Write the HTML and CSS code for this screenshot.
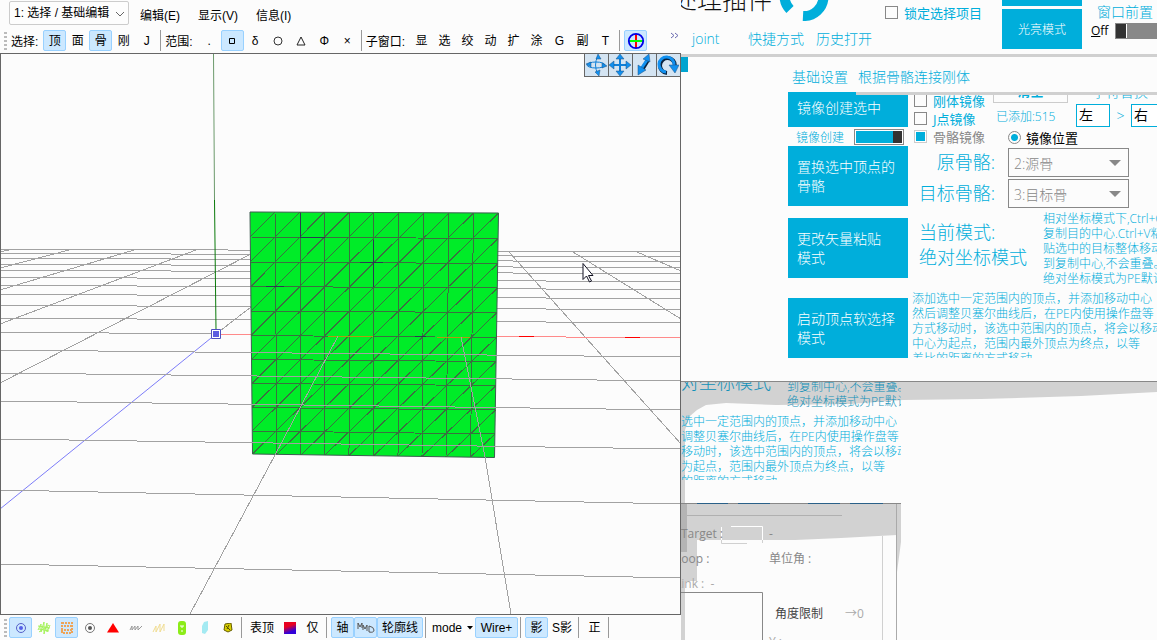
FILE: index.html
```html
<!DOCTYPE html>
<html lang="zh-CN">
<head>
<meta charset="utf-8">
<title>PmxView</title>
<link rel="stylesheet" href="styles.css">
</head>
<body>
<div class="desktop">
  <main class="viewer">
    <nav class="menubar">
      <span class="combo"><select aria-label="工具栏"><option>1: 选择 / 基础编辑</option></select>
        <svg class="combo-arrow" width="10" height="6" viewBox="0 0 10 6"><path d="M1 1l4 4 4-4" fill="none" stroke="#666"/></svg></span>
      <button class="menu">编辑(E)</button><button class="menu">显示(V)</button><button class="menu">信息(I)</button>
    </nav>
    <div class="toolbar">
      <i class="grip"></i><span class="bar-label">选择:</span>
      <button class="tool on">顶</button><button class="tool">面</button><button class="tool on">骨</button><button class="tool">刚</button><button class="tool">J</button>
      <i class="sep"></i><span class="bar-label">范围:</span>
      <button class="tool">.</button>
      <button class="tool on" aria-label="矩形"><svg width="8" height="8"><path d="M1.500 1.500h5v5h-5z" fill="none" stroke="#000"/></svg></button>
      <button class="tool">δ</button>
      <button class="tool" aria-label="圆"><svg width="12" height="12"><circle cx="6" cy="6" r="4" fill="none" stroke="#333"/></svg></button>
      <button class="tool" aria-label="三角"><svg width="12" height="12"><path d="M6 2l4 8H2z" fill="none" stroke="#222"/></svg></button>
      <button class="tool">Φ</button><button class="tool">×</button>
      <i class="sep"></i><span class="bar-label">子窗口:</span>
      <button class="tool">显</button><button class="tool">选</button><button class="tool">绞</button><button class="tool">动</button><button class="tool">扩</button><button class="tool">涂</button><button class="tool">G</button><button class="tool">副</button><button class="tool">T</button>
      <i class="sep"></i>
      <button class="tool on" aria-label="操作盘"><svg width="18" height="18" viewBox="0 0 18 18"><path d="M9 2v14" stroke="#f00" stroke-width="2"/><path d="M2 9h14" stroke="#0f0" stroke-width="2"/><circle cx="9" cy="9" r="7.200" fill="none" stroke="#0000e8" stroke-width="1.800"/></svg></button>
      <button class="overflow" aria-label="更多"><svg width="9" height="7"><path d="M1 1l3 2.500-3 2.500M5 1l3 2.500-3 2.500" fill="none" stroke="#6a6ab0"/></svg></button>
    </div>
    <section class="viewport">
      <svg class="scene" viewBox="1 54 679 560" preserveAspectRatio="xMinYMin slice">
        <g class="floor">
          <path d="M0 249L681 252M0 253L681 257M0 258L681 262M0 264L681 268M0 270L681 274M0 277L681 282M0 285L681 290M0 294L681 299M0 305L681 310M0 318L681 323M0 332L216 334"/>
          <path d="M0 252L13 249M0 268L73 249M0 290L134 250M0 324L196 250M0 383L251 254M216 334L251 307M509 252L681 444M573 252L681 319M637 252L681 271"/>
        </g>
        <path d="M216 334L681 338" stroke="#ff8a8a" shape-rendering="crispEdges"/>
        <path d="M519 336.500H534M625 337.500H640" stroke="#f00" shape-rendering="crispEdges"/>
        <path d="M213.500 54L214.500 200" stroke="#6c9a6c"/><path d="M214.500 200L216 330" stroke="#0a7a0a"/>
        <path d="M216 334L0 509" stroke="#7c7cf8"/>
        <path d="M250 212L498.500 213L494.500 457.500L252.500 454z" fill="#00ec28" stroke="#3d5a50"/>
        <path class="mesh" d="M275 212L277 454M300 212L301 455M324.500 212L325 455M349.500 212L349 455.500M374 212.500L373.500 456M399 212.500L398 456M424 213L422 456.500M449 213L446 457M473.500 213L470.500 457M250 237L498 238.500M250.500 262L498 263.500M251 286.500L497.500 288M251 311L497 312.500M251 335.500L496.500 337.500M251.500 359.500L496 361.500M252 383.500L496 385.500M252 407.500L495.500 410M252 431L495 434"/>
        <path class="mesh" d="M250 237L275 212M250 262L300 212M251 286.500L324.500 212M251 311L349.500 212M251 335.500L374 212M251.500 359.500L399 213M252 383.500L424 213M252 407.500L449 213M252 431L473.500 213M252.500 454L498.500 213M277 454L498 238.500M301 455L498 263.500M325 455L497.500 288M349 455.500L497 312.500M373.500 456L496.500 337.500M398 456L496 361.500M422 456.500L496 385.500M446 457L495.500 410M470.500 457L495 434"/>
        <path d="M300 237.500H325M360 262.500H383M266 286.500H284M415 336.500H426M373.500 240V287M300 213V237" stroke="#2c3a50" shape-rendering="crispEdges"/>
        <path d="M328 336.500H373M437 337.500H470" stroke="#b09a10" shape-rendering="crispEdges"/>
        <g class="floor">
          <path d="M0 350L681 357M0 373L681 381M0 401L681 410M0 439L681 449M0 490L681 504M0 564L681 578M338 336L275 455L190 614M461 337L485 457L511 614"/>
        </g>
        <path d="M211.500 329.500h9v9h-9z" fill="#fff" stroke="#5050c0"/><path d="M213 331h6v6h-6z" fill="#5c5ce0"/>
        <path d="M583 263.500v16l3.500-3.500 3 6 2-1-3-5.500h4.500z" fill="#fff" stroke="#112"/>
      </svg>
      <div class="navigator">
        <button aria-label="旋转视角"><svg viewBox="0 0 22 22"><g class="ico"><ellipse cx="11" cy="11" rx="9" ry="3"/><path d="M13 2q-5 9 0 18"/></g><path class="tip" d="M13 0l3 5h-5zM1 10l5-2v5zM22 12l-5-3v5zM10 18l5-2-1 6z"/></svg></button>
        <button aria-label="平移"><svg viewBox="0 0 22 22"><g class="ico thick"><path d="M11 4v14M4 11h14"/></g><path class="tip" d="M11 0l4 5H7zM11 22l4-5H7zM0 11l5-4v8zM22 11l-5-4v8z"/></svg></button>
        <button aria-label="缩放"><svg viewBox="0 0 22 22"><path d="M15 6L9 16" stroke="#0a2440" stroke-width="4"/><path d="M14 6L8 15" stroke="#1090f0" stroke-width="3"/><path class="tip" d="M16 0l1 8-7-3zM5 21l0-10 8 5z"/></svg></button>
        <button aria-label="转动"><svg viewBox="0 0 22 22"><path d="M10 19A7.500 7.500 0 1 1 18 12" fill="none" stroke="#0a2440" stroke-width="4"/><path d="M9 18A7.500 7.500 0 1 1 17 11" fill="none" stroke="#1090f0" stroke-width="3"/><path class="tip" d="M12 11h10l-4 8z"/></svg></button>
      </div>
    </section>
    <div class="toolbar bottom">
      <i class="grip"></i>
      <button class="tool on" aria-label="顶点"><svg width="12" height="12"><circle cx="6" cy="6" r="4.500" fill="none" stroke="#5560c8"/><circle cx="6" cy="6" r="2" fill="#5560e8"/></svg></button>
      <button class="tool" aria-label="面"><svg width="14" height="14"><path d="M1 9l3-6v8l3-10v12l3-11v9l3-7M1 5l12 2M2 11l10-7M2 8l10 2" fill="none" stroke="#a4f25a"/></svg></button>
      <button class="tool on" aria-label="线框"><svg width="14" height="14"><path d="M2 2h10v10H2zM1 5h12M1 9h12" fill="none" stroke="#eea458" stroke-width="2" stroke-dasharray="2 1"/></svg></button>
      <button class="tool" aria-label="骨骼"><svg width="12" height="12"><circle cx="6" cy="6" r="4.500" fill="none" stroke="#777"/><circle cx="6" cy="6" r="2" fill="#555"/></svg></button>
      <button class="tool" aria-label="法线"><svg width="12" height="10"><path d="M6 0l6 9.500H0z" fill="#f00"/></svg></button>
      <button class="tool" aria-label="权重"><svg width="14" height="8"><path d="M1 6l2-4v4l3-4v4l3-4v4l4-4" fill="none" stroke="#999"/></svg></button>
      <button class="tool" aria-label="刚体"><svg width="14" height="10"><path d="M1 9l3-6v6l4-8v8l4-8v7" fill="none" stroke="#f0dc90"/></svg></button>
      <button class="tool" aria-label="关节"><svg width="8" height="14"><rect width="8" height="14" rx="3" fill="#8cec18"/><path d="M3 4v2h2V4M3 10h2" fill="none" stroke="#fff"/></svg></button>
      <button class="tool" aria-label="软体"><svg width="8" height="14"><path d="M3 1l4-1v9l-3 4-3-1V5z" fill="#a4eaf2"/></svg></button>
      <button class="tool" aria-label="材质"><svg width="10" height="10"><path d="M2 1l6-1 1 7-4 2-4-2z" fill="#d8d000" stroke="#665c00"/><path d="M3 3l4 4M6 2L4 6" stroke="#554c00"/></svg></button>
      <i class="sep"></i><button class="tool wide">表顶</button>
      <button class="tool" aria-label="颜色"><i class="swatch"></i></button><button class="tool">仅</button>
      <i class="sep"></i>
      <button class="tool on">轴</button>
      <button class="tool on" aria-label="MMD"><svg width="18" height="14"><path d="M1 8V2l2 4 2-4v5M6 9V4l2 4 2-4v6M12 5v6q5 1 5-2t-5-4" fill="none" stroke="#555"/></svg></button>
      <button class="tool on wide">轮廓线</button>
      <i class="sep"></i>
      <button class="tool latin">mode<svg width="6" height="4"><path d="M0 0h6L3 3.500z"/></svg></button><button class="tool on wire">Wire+</button>
      <i class="sep"></i>
      <button class="tool on">影</button><button class="tool wide">S影</button>
      <i class="sep"></i><button class="tool">正</button><i class="sep"></i>
    </div>
  </main>

  <div class="side">
    <section class="plugin">
      <header class="head">
        <div class="brand">
          <div class="brand-row"><h1>处理插件</h1>
            <svg class="logo" width="52" height="50" viewBox="0 0 52 50"><path d="M6.500 26A19.500 19.500 0 0 0 12 38.500M25 45A19.500 19.500 0 0 0 45.500 26" fill="none" stroke="#00aedb" stroke-width="10"/></svg></div>
          <nav class="links"><a href="#joint">joint</a><a href="#quick">快捷方式</a><a href="#history">历史打开</a></nav>
        </div>
        <label class="check lock"><input type="checkbox">锁定选择项目</label>
        <div class="modes"><button aria-label="主题"></button><button>光亮模式</button></div>
        <div class="front"><span>窗口前置</span><label><u>O</u>ff<input type="checkbox" role="switch" class="switch"></label></div>
      </header>
      <i class="scroll-mark"></i>
      <nav class="tabs"><a href="#base">基础设置</a><a href="#link">根据骨骼连接刚体</a></nav>
      <div class="pane">
        <div class="actions">
          <button class="act first">镜像创建选中</button>
          <label class="mirror">镜像创建<input type="checkbox" role="switch" class="switch" checked></label>
          <button class="act">置换选中顶点的<br>骨骼</button>
          <button class="act mode-act">更改矢量粘贴<br>模式</button>
          <button class="act soft-act">启动顶点软选择<br>模式</button>
        </div>
        <div class="detail">
          <div class="options">
            <div class="checks">
              <label class="check"><input type="checkbox">刚体镜像</label>
              <label class="check"><input type="checkbox">J点镜像</label>
              <label class="check off"><input type="checkbox" checked>骨骼镜像</label>
            </div>
            <div class="middle">
              <button class="clear">清空</button>
              <span class="added">已添加:515</span>
              <label class="radio"><input type="radio" checked>镜像位置</label>
            </div>
            <div class="replace"><span class="replace-title">字符替换</span>
              <div class="pair"><input type="text" value="左" aria-label="原字符"><span>&gt;</span><input type="text" value="右" aria-label="新字符"></div></div>
          </div>
          <div class="bones">
            <label for="src">原骨骼:</label><span class="pick"><select id="src"><option>2:源骨</option></select></span>
            <label for="dst">目标骨骼:</label><span class="pick"><select id="dst"><option>3:目标骨</option></select></span>
          </div>
          <div class="current">
            <p class="status">当前模式:<br>绝对坐标模式</p>
            <p class="note">相对坐标模式下,Ctrl+C<br>复制目的中心.Ctrl+V粘<br>贴选中的目标整体移动<br>到复制中心,不会重叠。<br>绝对坐标模式为PE默认</p>
          </div>
          <p class="note soft">添加选中一定范围内的顶点，并添加移动中心<br>然后调整贝塞尔曲线后，在PE内使用操作盘等<br>方式移动时，该选中范围内的顶点，将会以移动<br>中心为起点，范围内最外顶点为终点，以等<br>差比的距离的方式移动</p>
        </div>
      </div>
    </section>
    <section class="trail">
      <svg class="trail-art" width="476" height="259" viewBox="0 0 476 259">
        <path d="M0 0H476V10L400 14 300 17 222 18 170 22 95 23 45 21 25 23 16 28 9 34 4 48V259H0z" fill="#d2d2d2"/>
        <path d="M0 122H220V160L216 190V153L160 156 114 158H16V199H0z" fill="#d2d2d2"/>
        <path d="M0 122H6V170H0z" fill="#b4b4b4"/>
        <path d="M0 121.500H220" stroke="#888"/><path d="M16 121.500H47M57 121.500H89M127 121.500H159M169 121.500H202" stroke="#2a6088"/>
        <path d="M6 133.500H161" stroke="#b0b0b0"/>
        <path d="M201.500 154V259" stroke="#d0d0d0"/><path d="M215.500 122V259" stroke="#aaa"/>
        <path d="M50 144.500H81.500V158M40.500 145V158" fill="none" stroke="#fff"/><path d="M81.500 158V161M40.500 158V161.500H66" fill="none" stroke="#d0d0d0"/>
        <path d="M0 210.500H81.500V259" fill="none" stroke="#888"/>
      </svg>
      <div class="echo">
        <div class="echo-row"><p class="status">绝对坐标模式</p><p class="note">到复制中心,不会重叠。<br>绝对坐标模式为PE默认</p></div>
        <p class="note soft">添加选中一定范围内的顶点，并添加移动中心<br>然后调整贝塞尔曲线后，在PE内使用操作盘等<br>方式移动时，该选中范围内的顶点，将会以移动<br>中心为起点，范围内最外顶点为终点，以等<br>差比的距离的方式移动</p>
      </div>
      <div class="ik">
        <span>Target :</span><span>-</span>
        <span class="cut">Loop :</span><span>单位角 :</span>
        <span class="cut faint">Link :&nbsp; -</span><span></span>
        <span></span><span class="limit"><b>角度限制</b><em>→0</em></span>
        <span></span><span class="faint">Y :</span>
      </div>
    </section>
  </div>
</div>
</body>
</html>
```
FILE: styles.css
```css
* { box-sizing: border-box; }
body { margin: 0; background: #fcfcfc; color: #000; font-family: "Liberation Sans", "Noto Sans CJK SC", sans-serif; font-size: 12px; overflow: hidden; }
button, select, input { font: inherit; color: inherit; margin: 0; }
button { border: 0; padding: 0; background: none; }
p, h1 { margin: 0; font-weight: inherit; }
a { color: inherit; text-decoration: none; }
.desktop { display: grid; grid-template-columns: 681fr 476fr; min-height: 100vh; }

.viewer { display: flex; flex-direction: column; height: 100vh; min-width: 0; background: #fcfcfc; }
.menubar { display: flex; align-items: center; height: 28px; padding-left: 9px; gap: 18px; }
.combo { position: relative; width: 120px; margin: 0 -7px 2px 0; }
.combo select { width: 120px; height: 24px; padding: 0 0 0 4px; appearance: none; border: 1px solid #ccc; border-radius: 2px; background: #fdfdfd; }
.combo-arrow { position: absolute; right: 4px; top: 10px; }
.menu { height: 24px; }
.toolbar { display: flex; align-items: center; height: 25px; padding-left: 4px; white-space: nowrap; overflow: hidden; }
.grip { width: 3px; height: 18px; margin-right: 4px; background: repeating-linear-gradient(#bbb 0 2px, transparent 2px 4px); flex: none; }
.bar-label { margin-right: 5px; }
.tool { display: flex; align-items: center; justify-content: center; width: 23px; height: 21px; flex: none; border: 1px solid transparent; border-radius: 2px; line-height: 18px; }
.tool.on { background: #cce8ff; border-color: #99d1ff; }
.tool.wide { width: auto; min-width: 23px; padding: 0 3px; }
.tool.on.wide { padding: 0 4px; }
.tool.latin { width: 45px; gap: 5px; }
.tool.wire { width: 43px; }
.tool svg { flex: none; }
.sep { width: 1px; height: 21px; margin: 0 4px 0 2px; background: #999; flex: none; }
.overflow { margin: 0 2px 12px auto; }
.bottom .grip { margin-right: 2px; }
.swatch { width: 12px; height: 12px; background: linear-gradient(160deg, #e80020 35%, #3000d8 75%); }
.viewport { position: relative; flex: 1; min-height: 0; border: 1px solid #666; overflow: hidden; }
.scene { display: block; width: 100%; height: 100%; }
.floor { fill: none; stroke: #a2a2a2; shape-rendering: crispEdges; }
.mesh { fill: none; stroke: #3a7040; shape-rendering: crispEdges; }
.navigator { position: absolute; top: 0; right: 0; display: flex; }
.navigator button { width: 24px; height: 23px; background: #d4e4f2; border: solid #666; border-width: 0 0 1px 1px; }
.navigator svg { display: block; width: 22px; height: 22px; }
.ico { fill: none; stroke: #1080d8; }
.thick { stroke-width: 2; }
.tip { fill: #1090f0; stroke: #205080; stroke-width: 0.5; }

.side { display: flex; flex-direction: column; height: 100vh; min-width: 0; overflow: hidden; color: #00aedb; font-family: "Open Sans", "Noto Sans CJK SC", sans-serif; font-weight: 300; }
.plugin { height: 382px; flex: none; border-bottom: 1px solid #888; overflow: hidden; }
.head { display: flex; height: 57px; border-bottom: 3px solid #d0d0d0; overflow: hidden; white-space: nowrap; }
.brand { width: 204px; flex: none; }
.brand-row { display: flex; height: 28px; overflow: hidden; }
.brand h1 { width: 97px; margin: -18px 0 0 -9px; color: #111; font-size: 25px; line-height: 34px; flex: none; }
.logo { margin: -29px 0 0 9px; flex: none; }
.links { display: flex; width: 191px; padding-left: 11px; font-size: 14px; line-height: 22px; }
.links a:nth-child(2) { margin: 0 12px 0 auto; }
.check { display: flex; align-items: center; gap: 6px; height: 18px; font-size: 13px; font-weight: 400; }
.check input { appearance: none; width: 13px; height: 13px; border: 1px solid #888; background: #fcfcfc; }
.check input:checked { border-color: #ccc; background: #00aedb; box-shadow: inset 0 0 0 1px #fff; }
.off { color: #888; }
.lock { margin-top: 3px; width: 117px; flex: none; }
.modes { display: flex; flex-direction: column; gap: 3px; width: 80px; margin-right: 9px; flex: none; }
.modes button { height: 40px; background: #00aedb; color: #fff; flex: none; }
.modes button:first-child { height: 6px; }
.front { font-size: 14px; line-height: 20px; padding-top: 2px; flex: none; }
.front span { padding-left: 6px; }
.front label { display: flex; align-items: center; color: #000; font-size: 12px; font-weight: 400; line-height: 18px; }
.front .switch { margin-left: 7px; }
.switch { appearance: none; width: 50px; height: 16px; border: 1px solid #888; background: linear-gradient(90deg, #333 10px, #fff 10px 11px, #888 11px); flex: none; }
.switch:checked { background: linear-gradient(90deg, #00aedb 38px, #333 38px); box-shadow: inset 0 0 0 1px #fff; }
.scroll-mark { display: block; width: 7px; height: 15px; background: #00a4d0; margin-bottom: -15px; }
.tabs { display: flex; gap: 10px; height: 38px; margin-left: 107px; padding: 10px 0 0 4px; font-size: 14px; line-height: 20px; background: linear-gradient(90deg, #00aedb 68px, #d0d0d0 68px) bottom / 100% 3px no-repeat; white-space: nowrap; }
.pane { display: flex; height: 263px; margin-left: 107px; overflow: hidden; }
.actions { display: flex; flex-direction: column; width: 120px; flex: none; }
.act { height: 60px; padding: 0 0 1px 9px; text-align: left; font-size: 14px; line-height: 19px; color: #fff; background: #00aedb; flex: none; }
.act.first { height: 32px; padding-bottom: 7px; }
.mode-act { margin: 12px 0 20px; }
.mirror { display: flex; align-items: center; justify-content: space-between; height: 19px; padding: 0 4px 0 8px; }
.detail { flex: 1; min-width: 0; white-space: nowrap; }
.options { display: flex; height: 52px; padding-left: 6px; overflow: hidden; }
.checks { width: 79px; margin-top: -4px; flex: none; }
.middle { display: flex; flex-direction: column; width: 83px; flex: none; }
.clear { width: 75px; height: 22px; margin: -14px 0 4px; padding-bottom: 3px; border: 1px solid #ccc; font-size: 13px; font-weight: 700; line-height: 16px; flex: none; }
.added { padding-left: 3px; line-height: 20px; }
.radio { display: flex; align-items: center; gap: 5px; height: 20px; padding-left: 15px; color: #000; font-size: 13px; font-weight: 400; }
.radio input { appearance: none; width: 13px; height: 13px; border: 1px solid #888; border-radius: 50%; background: radial-gradient(#00aedb 0 3px, #fcfcfc 4px); flex: none; }
.replace-title { display: block; margin-top: -13px; padding-left: 16px; font-size: 14px; line-height: 20px; height: 22px; }
.pair { display: flex; align-items: center; font-size: 14px; }
.pair input { width: 34px; height: 23px; padding: 0 2px 3px; border: 1px solid #00aedb; background: #fff; color: #000; font-weight: 400; flex: none; }
.pair span { width: 21px; text-align: center; flex: none; }
.bones { display: grid; grid-template-columns: 87px 121px; column-gap: 13px; row-gap: 2px; height: 70px; align-content: start; padding-top: 1px; font-size: 18px; line-height: 29px; text-align: right; }
.pick { position: relative; height: 29px; font-size: 14px; }
.pick::after { content: ""; position: absolute; right: 8px; top: 12px; border: 6px solid transparent; border-top-color: #888; border-bottom: 0; }
.pick select { display: block; width: 121px; height: 29px; padding: 0 5px 1px; appearance: none; border: 1px solid #888; background: #fcfcfc; color: #888; }
.current { display: flex; height: 79px; }
.status { width: 124px; padding: 3px 0 0; font-size: 18px; line-height: 25px; flex: none; }
.current .status { width: 135px; padding-left: 11px; }
.note { line-height: 15px; white-space: nowrap; }
.current .note { margin-top: -6px; }
.soft { height: 68px; padding-left: 4px; margin-top: -5px; overflow: hidden; }

.trail { position: relative; flex: 1; overflow: hidden; white-space: nowrap; }
.trail-art { position: absolute; inset: 0; }
.echo { position: relative; width: 220px; height: 98px; overflow: hidden; }
.echo-row { display: flex; height: 32px; overflow: hidden; color: #1090b8; }
.echo .status { margin: -15px 0 0 -18px; }
.echo-row .note { margin-top: -3px; }
.echo .soft { margin-left: -28px; margin-top: 0; }
.ik { position: relative; display: grid; grid-template-columns: 88px 1fr; grid-template-rows: 25px 25px 25px 33px 24px; padding-top: 42px; line-height: 24px; color: #888; font-weight: 400; }
.cut { margin-left: -6px; }
.faint { color: #aaa; }
.limit { padding: 5px 0 0 6px; display: flex; gap: 22px; }
.limit b { color: #444; font-weight: 400; }
.limit em { color: #aaa; font-style: normal; }
```
